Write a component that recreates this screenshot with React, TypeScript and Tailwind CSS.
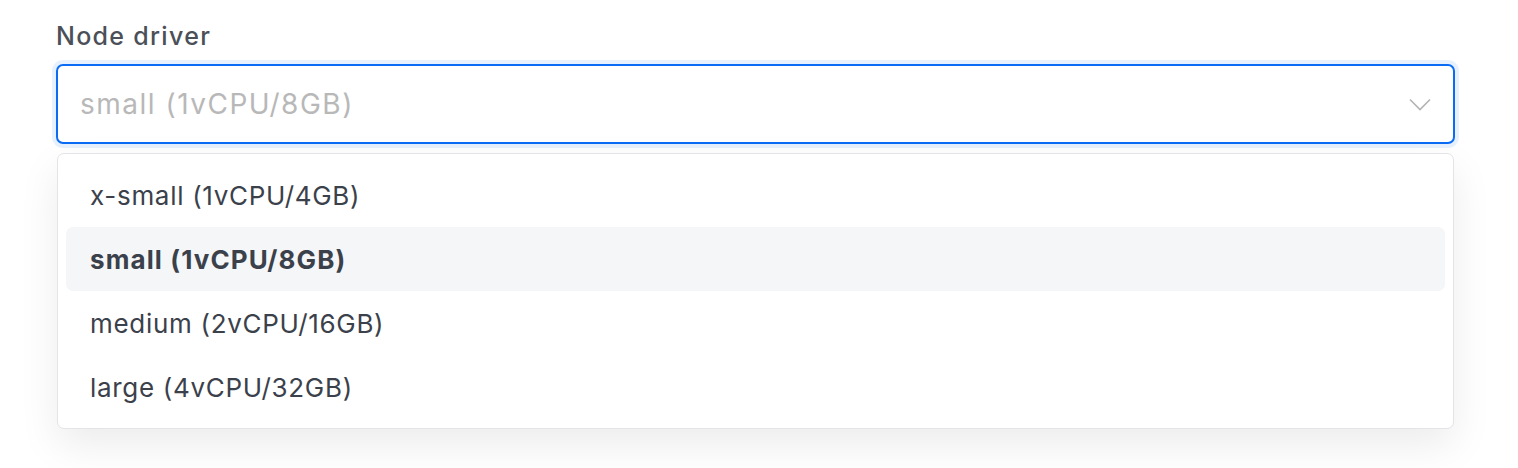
import React from 'react';

const options = [
  'x-small (1vCPU/4GB)',
  'small (1vCPU/8GB)',
  'medium (2vCPU/16GB)',
  'large (4vCPU/32GB)',
];

export default function App() {
  const selected = 'small (1vCPU/8GB)';

  return (
    <div className="h-[468px] w-[1518px] bg-white font-['Inter',sans-serif]">
      <div className="pl-[56px] pr-[63px] pt-[20px]">
        <label className="block text-[25px] font-medium leading-[32px] tracking-[1.3px] text-[#4b5058]">Node driver</label>

        {/* select box */}
        <div className="mt-[12px] flex h-[80px] items-center justify-between rounded-[7px] border-2 border-[#0a6cf5] bg-white pl-[22px] pr-[20px] ring-4 ring-[#e7f1fd]">
          <span className="text-[28px] tracking-[1.5px] text-[#b8b8b8]">{selected}</span>
          <svg width="22" height="13" viewBox="0 0 22 13" fill="none" className="mr-[2px]">
            <path d="M1 1.5 L11 11.5 L21 1.5" stroke="#b3b3b3" strokeWidth="1.6" />
          </svg>
        </div>

        {/* dropdown menu */}
        <div className="mx-px mt-[9px] rounded-[7px] border border-[#e3e4e8] bg-white px-[8px] py-[9px] shadow-[0_16px_40px_rgba(0,0,0,0.08)]">
          {options.map((opt) => {
            const active = opt === selected;
            return (
              <div
                key={opt}
                className={`flex h-[64px] items-center rounded-[7px] pl-[24px] text-[26px] text-[#3b414b] ${
                  active ? 'bg-[#f5f6f8] font-bold tracking-[1.1px]' : 'tracking-[0.7px]'
                }`}
              >
                {opt}
              </div>
            );
          })}
        </div>
      </div>
    </div>
  );
}
